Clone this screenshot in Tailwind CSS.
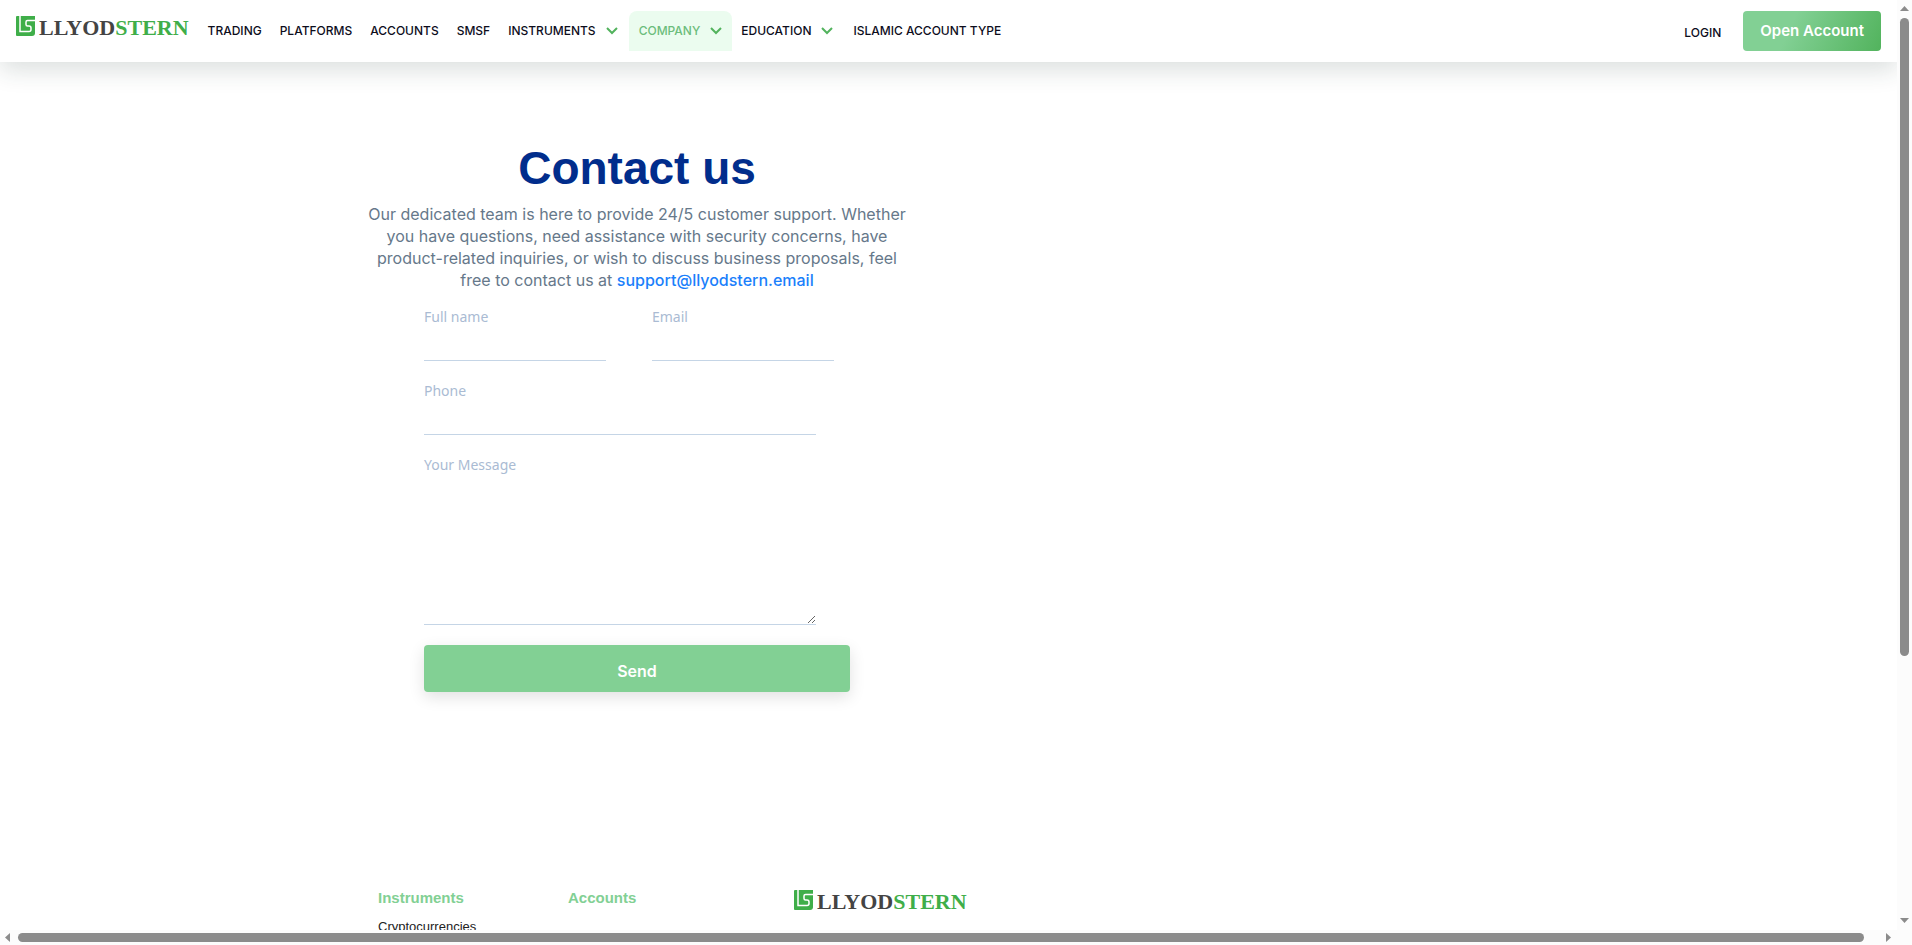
<!DOCTYPE html>
<html lang="en">
<head>
    <meta charset="UTF-8">
    <meta name="viewport" content="width=device-width, initial-scale=1.0">
    <title>Contact us | LlyodStern</title>
    <script src="https://cdn.jsdelivr.net/npm/@tailwindcss/browser@4"></script>
</head>
<body class="bg-white">
    <div class="grid h-screen grid-cols-[minmax(0,1fr)_15px] grid-rows-[minmax(0,1fr)_15px] overflow-hidden">
        <!-- Page -->
        <div class="flex flex-col overflow-hidden">
            <header class="flex h-[62px] shrink-0 items-start bg-white pl-4 pr-4 shadow-[0_8px_24px_rgba(28,57,49,0.16)]">
                <a href="#" class="mt-4 flex shrink-0 items-start gap-1" aria-label="LlyodStern">
                    <svg class="h-5 w-[19px]" viewBox="0 0 19 20">
                        <path fill="#3fae49" d="M1 0h18v17q0 3-3 3H1q-1 0-1-1V1q0-1 1-1z"/>
                        <path fill="none" stroke="#fff" stroke-width="1.5" d="M4 0v15.500h9q2 0 2-2v-1.500q0-2-2-2h-1.500q-1.500 0-1.500-1.500V6q0-1.500 1.500-1.500H19"/>
                    </svg>
                    <span class="font-['Liberation_Serif'] text-[22px] leading-6 font-bold text-[#444]">LLYOD<span class="text-[#3fae49]">STERN</span></span>
                </a>
                <nav class="mt-[11px] flex pl-[10px] font-['Inter',sans-serif] text-[12px] leading-10 font-medium whitespace-nowrap text-[#0d0d1c]">
                    <a href="#" class="px-[9px]">TRADING</a>
                    <a href="#" class="px-[9px]">PLATFORMS</a>
                    <a href="#" class="px-[9px]">ACCOUNTS</a>
                    <a href="#" class="px-[9px]">SMSF</a>
                    <a href="#" class="flex items-center gap-[10px] pr-[11px] pl-[9px]">INSTRUMENTS
                        <svg class="h-2 w-3" viewBox="0 0 12 8" fill="none" stroke="#52b35d" stroke-width="2"><path d="M1 1l5 5 5-5"/></svg>
                    </a>
                    <a href="#" class="flex items-center gap-[10px] rounded-t-lg bg-[#ebfcef] px-[10px] text-[#6cbd7c]">COMPANY
                        <svg class="h-2 w-3" viewBox="0 0 12 8" fill="none" stroke="#52b35d" stroke-width="2"><path d="M1 1l5 5 5-5"/></svg>
                    </a>
                    <a href="#" class="flex items-center gap-[10px] pr-[11px] pl-[9px]">EDUCATION
                        <svg class="h-2 w-3" viewBox="0 0 12 8" fill="none" stroke="#52b35d" stroke-width="2"><path d="M1 1l5 5 5-5"/></svg>
                    </a>
                    <a href="#" class="px-[9px]">ISLAMIC ACCOUNT TYPE</a>
                </nav>
                <div class="mt-[11px] ml-auto flex items-end gap-[22px] font-['Inter',sans-serif]">
                    <a href="#" class="text-[12px] leading-9 font-medium text-[#0d0d1c]">LOGIN</a>
                    <a href="#" class="rounded bg-linear-[115deg] from-[#82d094] from-35% to-[#52b35d] px-[17px] text-[15px] leading-10 font-semibold text-white">Open Account</a>
                </div>
            </header>

            <main class="w-[1274px] shrink-0 pt-[81px]">
                <h1 class="text-center font-['Liberation_Sans'] text-[46px] leading-[50px] font-bold text-[#012d8c]">Contact us</h1>
                <p class="mx-auto mt-[10px] w-[548px] text-center font-['Inter',sans-serif] text-[16px] leading-[22px] text-[#66788a]">
                    Our dedicated team is here to provide 24/5 customer support. Whether you have questions, need assistance with security concerns, have product-related inquiries, or wish to discuss business proposals, feel free to contact us at
                    <a href="#" class="font-medium text-[#1b7ffb]">support@llyodstern.email</a>
                </p>

                <form class="mx-auto mt-4 w-[426px] font-['Noto_Sans',sans-serif] text-[14px] leading-5 text-[#aabbd3]">
                    <div class="flex gap-[46px]">
                        <div class="w-[182px]">
                            <label for="name" class="block">Full name</label>
                            <input id="name" type="text" class="block h-[34px] w-full border-b border-[#c5d5e6] outline-none">
                        </div>
                        <div class="w-[182px]">
                            <label for="email" class="block">Email</label>
                            <input id="email" type="email" class="block h-[34px] w-full border-b border-[#c5d5e6] outline-none">
                        </div>
                    </div>
                    <div class="mt-5 w-[392px]">
                        <label for="phone" class="block">Phone</label>
                        <input id="phone" type="tel" class="block h-[34px] w-full border-b border-[#c5d5e6] outline-none">
                    </div>
                    <div class="mt-5 w-[392px]">
                        <label for="message" class="block">Your Message</label>
                        <textarea id="message" class="block h-[150px] w-full resize border-b border-[#c5d5e6] outline-none"></textarea>
                    </div>
                    <button type="button" class="mt-5 block h-[47px] w-full rounded bg-[#82d094] pt-1 font-['Inter',sans-serif] text-[16px] font-semibold text-white shadow-[0_5px_16px_rgba(0,0,0,0.12)]">Send</button>
                </form>
            </main>

            <footer class="flex shrink-0 items-start pt-[196px] pl-[378px] font-['Liberation_Sans']">
                <div class="w-[190px]">
                    <h2 class="text-[15px] leading-5 font-bold text-[#82d094]">Instruments</h2>
                    <a href="#" class="mt-[9px] block text-[13px] leading-5 text-[#222]">Cryptocurrencies</a>
                </div>
                <div class="w-[226px]">
                    <h2 class="text-[15px] leading-5 font-bold text-[#82d094]">Accounts</h2>
                </div>
                <a href="#" class="mt-[2px] flex shrink-0 items-start gap-1" aria-label="LlyodStern">
                    <svg class="h-5 w-[19px]" viewBox="0 0 19 20">
                        <path fill="#3fae49" d="M1 0h18v17q0 3-3 3H1q-1 0-1-1V1q0-1 1-1z"/>
                        <path fill="none" stroke="#fff" stroke-width="1.5" d="M4 0v15.500h9q2 0 2-2v-1.500q0-2-2-2h-1.500q-1.500 0-1.500-1.500V6q0-1.500 1.500-1.500H19"/>
                    </svg>
                    <span class="font-['Liberation_Serif'] text-[22px] leading-6 font-bold text-[#444]">LLYOD<span class="text-[#3fae49]">STERN</span></span>
                </a>
            </footer>
        </div>

        <!-- Vertical scrollbar -->
        <div class="flex flex-col items-center bg-[#fcfcfc] pt-[6px] pb-[7px]">
            <svg class="h-[5px] w-[9px]" viewBox="0 0 9 5"><path fill="#8b8b8b" d="M0 5h9L4.500 0z"/></svg>
            <div class="mt-[7px] h-[638px] w-[9px] rounded-full bg-[#8b8b8b]"></div>
            <svg class="mt-auto h-[5px] w-[9px]" viewBox="0 0 9 5"><path fill="#8b8b8b" d="M0 0h9L4.500 5z"/></svg>
        </div>

        <!-- Horizontal scrollbar -->
        <div class="flex items-center bg-[#fcfcfc] pr-[6px] pl-[5px]">
            <svg class="h-[9px] w-[5px]" viewBox="0 0 5 9"><path fill="#8b8b8b" d="M5 0v9L0 4.500z"/></svg>
            <div class="mr-[22px] ml-2 h-[9px] flex-1 rounded-full bg-[#8b8b8b]"></div>
            <svg class="h-[9px] w-[5px]" viewBox="0 0 5 9"><path fill="#8b8b8b" d="M0 0v9L5 4.500z"/></svg>
        </div>
        <div class="bg-[#fcfcfc]"></div>
    </div>
</body>
</html>
